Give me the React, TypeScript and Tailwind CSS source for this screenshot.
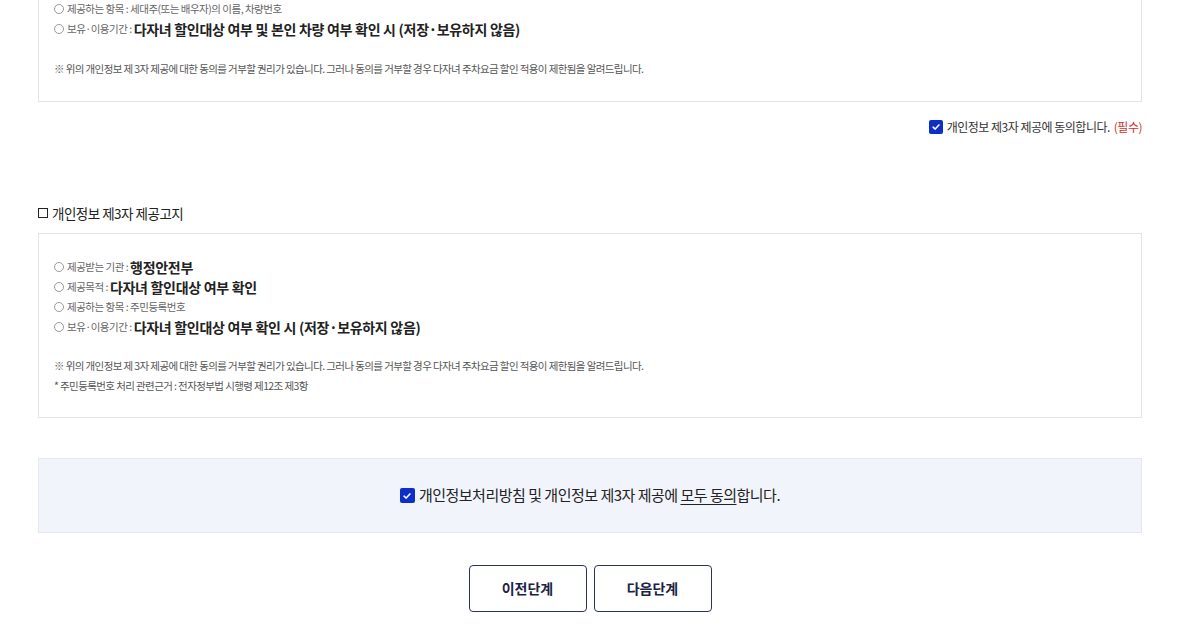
import React from 'react'

const font = { fontFamily: '"Noto Sans CJK KR", "Noto Sans", sans-serif' }

function Item({ label, value, big }: { label: string; value: string; big?: boolean }) {
  return (
    <li className="flex items-center h-5 leading-5">
      <span className="inline-block w-[10px] h-[10px] rounded-full border border-[#999] mr-[3px]" />
      <span className="text-[10.5px] text-[#666] tracking-[-0.5px]">{label} : </span>
      {big ? (
        <span className="ml-[2px] text-[14px] font-bold text-[#222] tracking-[-0.3px]">{value}</span>
      ) : (
        <span className="ml-[2px] text-[10.5px] text-[#666] tracking-[-0.5px]">{value}</span>
      )}
    </li>
  )
}

function Check({ size = 'w-[14px] h-[14px]' }: { size?: string }) {
  return (
    <span className={`inline-flex items-center justify-center rounded-[2px] bg-[#0d2fc7] ${size}`}>
      <svg viewBox="0 0 12 12" className="w-[10px] h-[10px]" fill="none" stroke="white" strokeWidth="1.8" strokeLinecap="round" strokeLinejoin="round">
        <path d="M2.5 6.2 L5 8.5 L9.5 3.5" />
      </svg>
    </span>
  )
}

const note = 'text-[10.5px] leading-5 text-[#555] tracking-[-0.6px]'

export default function App() {
  return (
    <div className="bg-white w-[1200px] h-[639px] overflow-hidden" style={font}>
      <div className="ml-[38px] w-[1104px] mt-[-26px]">
        {/* First consent box (scrolled, top part above the fold) */}
        <div className="border border-[#e3e3e3] px-[15px] pt-[24px] pb-[22px]">
          <ul>
            <Item label="제공하는 항목" value="세대주(또는 배우자)의 이름, 차량번호" />
            <Item label="보유·이용기간" value="다자녀 할인대상 여부 및 본인 차량 여부 확인 시 (저장·보유하지 않음)" big />
          </ul>
          <p className={`mt-[20px] ${note}`}>
            ※ 위의 개인정보 제 3자 제공에 대한 동의를 거부할 권리가 있습니다. 그러나 동의를 거부할 경우 다자녀 주차요금 할인 적용이 제한됨을 알려드립니다.
          </p>
        </div>

        <div className="flex justify-end items-center mt-[17px] h-[16px]">
          <label className="flex items-center gap-[4px] text-[12px] text-[#333] tracking-[-0.5px]">
            <Check />
            개인정보 제3자 제공에 동의합니다. <span className="text-[#d0312d]">(필수)</span>
          </label>
        </div>

        {/* Second notice */}
        <h3 className="mt-[68px] flex items-center text-[13.5px] text-[#222] tracking-[-0.5px] h-5">
          <span className="inline-block w-[10px] h-[10px] border border-[#222] mr-[4px]" />
          개인정보 제3자 제공고지
        </h3>
        <div className="mt-[10px] border border-[#e3e3e3] px-[15px] pt-[23px] pb-[21px]">
          <ul>
            <Item label="제공받는 기관" value="행정안전부" big />
            <Item label="제공목적" value="다자녀 할인대상 여부 확인" big />
            <Item label="제공하는 항목" value="주민등록번호" />
            <Item label="보유·이용기간" value="다자녀 할인대상 여부 확인 시 (저장·보유하지 않음)" big />
          </ul>
          <p className={`mt-[19px] ${note}`}>
            ※ 위의 개인정보 제 3자 제공에 대한 동의를 거부할 권리가 있습니다. 그러나 동의를 거부할 경우 다자녀 주차요금 할인 적용이 제한됨을 알려드립니다.
          </p>
          <p className={note}>* 주민등록번호 처리 관련근거 : 전자정부법 시행령 제12조 제3항</p>
        </div>

        {/* All agree */}
        <div className="mt-[40px] h-[75px] bg-[#f2f4fc] border border-[#e6e7ee] flex items-center justify-center">
          <label className="flex items-center gap-[4px] text-[15px] text-[#222] tracking-[-0.5px]">
            <Check size="w-[15px] h-[15px]" />
            <span>
              개인정보처리방침 및 개인정보 제3자 제공에 <span className="underline underline-offset-[3px]">모두 동의</span>합니다.
            </span>
          </label>
        </div>

        {/* Buttons */}
        <div className="mt-[32px] flex justify-center gap-[7px]">
          <button className="w-[118px] h-[47px] rounded-[4px] border border-[#2b3262] bg-white text-[14px] font-bold text-[#1b2245]">
            이전단계
          </button>
          <button className="w-[118px] h-[47px] rounded-[4px] border border-[#2b3262] bg-white text-[14px] font-bold text-[#1b2245]">
            다음단계
          </button>
        </div>
      </div>
    </div>
  )
}
